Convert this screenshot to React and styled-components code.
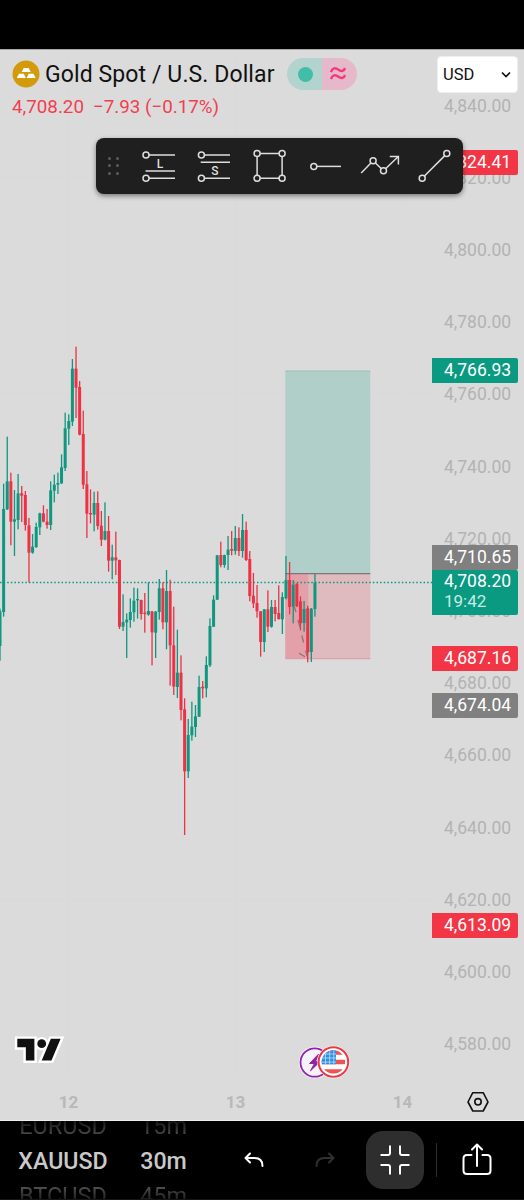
import React from "react";
import styled, { createGlobalStyle } from "styled-components";

const GlobalStyle = createGlobalStyle`
  * {
    box-sizing: border-box;
  }

  body {
    margin: 0;
    background: #000;
    font-family: Roboto, "Liberation Sans", sans-serif;
  }
`;

const UP = "#0f9780";
const DOWN = "#ee3145";

const Page = styled.div`
  display: flex;
  flex-direction: column;
  width: 524px;
  height: 1200px;
  overflow: hidden;
  background: #000;
`;

const StatusBar = styled.div`
  height: 49px;
  flex: none;
`;

const ChartArea = styled.div`
  position: relative;
  display: flex;
  height: 1072px;
  flex: none;
  background: #dbdbdb;
  border-top: 1px solid #a8a8a8;
  border-bottom: 1px solid #ededed;
`;

const ChartMain = styled.div`
  width: 432px;
  display: flex;
  flex-direction: column;
`;

const PlotSvg = styled.svg`
  display: block;
  flex: none;
`;

const Header = styled.div`
  position: absolute;
  top: 8px;
  left: 12px;
  display: flex;
  flex-direction: column;
`;

const TitleRow = styled.div`
  display: flex;
  align-items: center;
  height: 32px;
`;

const Title = styled.div`
  margin-left: 5px;
  width: 242px;
  font-size: 23px;
  letter-spacing: 0.1px;
  color: #111;
  white-space: nowrap;
`;

const StatusPill = styled.div`
  display: flex;
  width: 70px;
  height: 32px;
  border-radius: 16px;
  overflow: hidden;
`;

const PillHalf = styled.div`
  display: flex;
  align-items: center;
  justify-content: center;
  flex: 1;
  background: ${(p) => p.$bg};
`;

const Dot = styled.div`
  width: 15px;
  height: 15px;
  margin-left: 2px;
  border-radius: 50%;
  background: #42bda8;
`;

const QuoteRow = styled.div`
  display: flex;
  gap: 9px;
  height: 33px;
  align-items: center;
  font-size: 18.8px;
  color: #f23f50;
  white-space: nowrap;
`;

const PriceAxis = styled.div`
  position: relative;
  width: 92px;
  display: flex;
  flex-direction: column;
  padding-top: 19.7px;
`;

const AxisLabel = styled.div`
  flex: none;
  height: 72.2px;
  line-height: 72.2px;
  padding-left: 12px;
  font-size: 17.5px;
  color: #b3b3b3;
`;

const PriceTag = styled.div`
  position: absolute;
  top: ${(p) => p.$top}px;
  left: 0;
  width: 86px;
  height: ${(p) => p.$height || 25}px;
  padding-left: 12px;
  border-radius: 0 2px 2px 0;
  background: ${(p) => p.$bg};
  color: #fff;
  font-size: 17.5px;
  line-height: ${(p) => (p.$height ? 23 : 24)}px;
`;

const Countdown = styled.div`
  font-size: 17px;
  line-height: 17px;
  color: #c5ebe4;
`;

const CurrencySelect = styled.div`
  position: absolute;
  top: 6px;
  left: 437px;
  width: 81px;
  height: 37px;
  display: flex;
  align-items: center;
  justify-content: space-between;
  padding: 0 6px 0 5px;
  border: 1px solid #eee;
  border-radius: 4px;
  background: #fff;
  color: #111;
  font-size: 16.5px;
`;

const TimeAxis = styled.div`
  display: flex;
  height: 38px;
  padding-left: 35px;
`;

const TimeLabel = styled.div`
  width: 167px;
  flex: none;
  padding-right: 100px;
  text-align: center;
  font-size: 17px;
  font-weight: 700;
  line-height: 40px;
  color: #b8b8b8;
`;

const SettingsIcon = styled.svg`
  position: absolute;
  left: 466px;
  top: 1040px;
`;

const DrawingBar = styled.div`
  position: absolute;
  top: 88px;
  left: 96px;
  width: 367px;
  height: 55.5px;
  display: flex;
  align-items: center;
  border-radius: 8px;
  background: #1f1f1f;
  box-shadow: 0 2px 5px rgba(0, 0, 0, 0.45);
`;

const DragHandle = styled.div`
  display: grid;
  grid-template-columns: 3px 3px;
  gap: 4.3px 5.7px;
  width: 35.3px;
  padding-left: 11.8px;

  i {
    width: 3px;
    height: 3px;
    border-radius: 50%;
    background: #5c5c5c;
  }
`;

const Tool = styled.div`
  display: flex;
  justify-content: center;
  width: 55.3px;

  svg {
    fill: none;
    stroke: #dedede;
    stroke-width: 1.5;
  }

  circle {
    fill: #1f1f1f;
  }

  text {
    fill: #dedede;
    stroke: none;
    font-size: 12px;
    font-weight: 500;
    text-anchor: middle;
  }
`;

const BottomBar = styled.div`
  display: flex;
  align-items: center;
  height: 79px;
  flex: none;
  background: #000;
  border-bottom: 1px solid #151515;
`;

const Wheel = styled.div`
  display: flex;
  flex-direction: column;
  align-items: center;
  justify-content: center;
  width: ${(p) => p.$width}px;
  height: 78px;
  padding-top: 2px;
  margin-left: ${(p) => p.$left}px;
  overflow: hidden;
`;

const WheelItem = styled.div`
  flex: none;
  height: 35px;
  line-height: 35px;
  font-size: ${(p) => (p.$active ? 23.2 : 23.5)}px;
  font-weight: ${(p) => (p.$active ? 500 : 400)};
  color: ${(p) => (p.$active ? "#c9c9c9" : "transparent")};
  background: ${(p) =>
    p.$active ? "none" : `linear-gradient(${p.$fade}, #080808 25%, #5a5a5a 85%)`};
  background-clip: ${(p) => (p.$active ? "border-box" : "text")};
`;

const IconSlot = styled.div`
  display: flex;
  align-items: center;
  justify-content: center;
  width: ${(p) => p.$width}px;
  height: 40px;

  svg {
    flex: none;
    fill: none;
    stroke: ${(p) => p.$color || "#fff"};
    stroke-width: 2;
    stroke-linecap: round;
    stroke-linejoin: round;
  }
`;

const FullscreenButton = styled(IconSlot)`
  height: 58px;
  margin-left: 31.5px;
  border-radius: 17px;
  background: #2e2e2e;
  flex: none;

  svg {
    stroke-linecap: butt;
  }
`;

const Divider = styled.div`
  width: 1px;
  height: 34px;
  margin: 0 25.5px 0 12px;
  background: #2a2a2a;
`;

// bars: direction, high, body top, body bottom, low - thirds of a pixel below "top"
const segments = [
  {
    top: 340,
    bars: [
      ["u", 806, 814, 918, 962], ["u", 431, 507, 816, 830], ["u", 290, 424, 508, 510],
      ["d", 398, 424, 545, 616], ["u", 450, 538, 545, 648], ["u", 402, 460, 540, 568],
      ["d", 438, 460, 467, 546], ["d", 453, 465, 555, 572], ["d", 534, 556, 638, 727],
      ["u", 582, 620, 638, 641], ["u", 548, 561, 621, 624], ["u", 518, 520, 562, 585],
      ["d", 496, 520, 545, 547], ["d", 507, 545, 555, 566], ["u", 424, 451, 555, 570],
      ["u", 404, 434, 452, 487], ["u", 398, 429, 434, 462], ["u", 343, 382, 430, 432],
      ["u", 218, 265, 384, 393], ["u", 223, 243, 266, 315], ["u", 57, 86, 245, 258],
      ["d", 20, 86, 143, 234], ["d", 123, 141, 284, 286], ["d", 212, 282, 434, 447],
      ["d", 393, 433, 521, 594], ["d", 448, 519, 523, 550], ["u", 455, 489, 524, 574],
      ["d", 454, 489, 558, 569], ["d", 513, 557, 599, 618], ["u", 487, 573, 599, 601],
      ["d", 528, 573, 662, 695], ["u", 614, 652, 662, 718], ["d", 575, 652, 661, 705],
      ["d", 659, 660, 860, 867],
    ],
  },
  {
    top: 480,
    bars: [
      ["u", 343, 426, 440, 453], ["u", 400, 419, 427, 534], ["u", 355, 396, 420, 443],
      ["u", 323, 362, 397, 425], ["u", 325, 357, 361, 416], ["d", 359, 360, 402, 419],
      ["d", 339, 398, 402, 458], ["u", 307, 393, 404, 407], ["d", 393, 394, 457, 556],
      ["u", 393, 395, 458, 534], ["u", 297, 325, 396, 419], ["d", 307, 325, 427, 448],
      ["u", 270, 333, 427, 508], ["d", 299, 333, 496, 617], ["d", 380, 496, 620, 645],
      ["u", 449, 578, 621, 654], ["d", 526, 578, 690, 721], ["d", 655, 688, 874, 1065],
      ["u", 717, 765, 874, 894], ["u", 665, 740, 766, 782], ["u", 675, 709, 741, 771],
      ["u", 587, 621, 710, 711], ["d", 603, 620, 625, 655], ["u", 529, 555, 625, 652],
      ["u", 415, 438, 556, 561], ["u", 346, 359, 440, 441], ["u", 225, 226, 359, 360],
      ["d", 185, 225, 255, 262], ["u", 224, 225, 255, 263], ["u", 168, 209, 225, 270],
      ["d", 153, 207, 212, 226], ["u", 138, 174, 213, 224], ["d", 142, 174, 213, 228],
      ["u", 102, 150, 213, 233], ["d", 125, 150, 240, 243], ["d", 213, 237, 348, 364],
      ["d", 279, 347, 370, 384], ["d", 315, 369, 394, 413], ["d", 393, 394, 486, 530],
      ["u", 387, 388, 486, 516],
    ],
  },
  {
    top: 500,
    bars: [
      ["d", 271, 328, 380, 396], ["u", 300, 321, 380, 383], ["d", 300, 321, 342, 364],
      ["d", 256, 339, 357, 359], ["u", 277, 291, 358, 402], ["u", 168, 240, 295, 298],
      ["d", 186, 240, 321, 343], ["u", 240, 254, 320, 370], ["d", 250, 251, 319, 321],
      ["d", 289, 304, 370, 391], ["u", 303, 327, 369, 395], ["d", 317, 325, 457, 487],
      ["u", 324, 326, 456, 486], ["u", 222, 248, 327, 350],
    ],
  },
];

const candles = segments
  .flatMap((s) => s.bars.map(([dir, ...ys]) => ({ dir, ys: ys.map((y) => s.top + y / 3) })))
  .map((c, i) => ({ ...c, x: i * 3.62 }));

const axisPrices = Array.from({ length: 14 }, (_, i) => 4840 - i * 20);

const tags = [
  { price: "4,824.41", top: 100, bg: "#f23645" },
  { price: "4,766.93", top: 308.4, bg: "#0a9981" },
  { price: "4,710.65", top: 495, bg: "#808080" },
  { price: "4,687.16", top: 596.4, bg: "#f23645" },
  { price: "4,674.04", top: 643.4, bg: "#808080" },
  { price: "4,613.09", top: 863.4, bg: "#f23645" },
];

function Plot() {
  return (
    <PlotSvg width="432" height="1032" viewBox="0 50 432 1032">
      {[68.5, 235.5, 402.5].map((x) => (
        <path key={x} d={`M${x} 50V1076`} stroke="#d9d9d9" />
      ))}
      {axisPrices.map((p, i) => (
        <path key={p} d={`M0 ${105.6 + i * 72.2}H432`} stroke="#dadada" />
      ))}

      <rect x="285.3" y="371" width="85" height="202.5" fill="#b1cfc9" />
      <path d="M285.3 371H370.3" stroke="#9dbdb6" />
      <rect x="285.3" y="573.5" width="85" height="85.5" fill="#dfbabe" />
      <rect x="285.3" y="574" width="23" height="85" fill="#e2a1a8" />
      <path d="M285.3 658.7H370.3" stroke="#df9ba2" />
      <path d="M285.3 573.6H370.3" stroke="#827578" strokeWidth="1.2" />

      <path d="M0 582.5H432" stroke={UP} strokeWidth="1.5" strokeDasharray="1.5 2.12" />

      {candles.map(({ x, dir, ys: [high, top, bottom, low] }) => (
        <g key={x} fill={dir === "u" ? UP : DOWN}>
          <rect x={x - 0.65} y={high} width="1.3" height={low - high} />
          <rect x={x - 1.5} y={top} width="3" height={Math.max(bottom - top, 1.3)} />
        </g>
      ))}

      <path
        d="M294.3 606.7L296 612M298 620L300 627.5M301.8 635.5L303.7 642.5M305.7 650.7L307 656M299 653.3L305 656.7"
        stroke="#8c7376"
        strokeWidth="1.3"
      />

      {/* watermark logo */}
      <g transform="translate(17.3 1034) scale(1.22 1.21)" strokeLinejoin="miter">
        <g fill="#fff" stroke="#fff" strokeWidth="4">
          <path d="M14 22H7V11H0V4h14v18zM28 22h-8l7.5-18h8L28 22z" />
          <circle cx="20" cy="8" r="3.6" />
        </g>
        <g fill="#111">
          <path d="M14 22H7V11H0V4h14v18zM28 22h-8l7.5-18h8L28 22z" />
          <circle cx="20" cy="8" r="3.6" />
        </g>
      </g>

      {/* events on the time axis */}
      <circle cx="314.7" cy="1062.5" r="15.8" fill="#fff" />
      <circle cx="314.7" cy="1062.5" r="14.2" fill="#f7f1f9" stroke="#8e24aa" strokeWidth="1.8" />
      <path d="M318.5 1054.2L309.5 1063.5H314.5L310.5 1070.7L320 1061.7H315.5Z" fill="#8e24aa" stroke="#8e24aa" strokeLinejoin="round" />
      <circle cx="333.4" cy="1062" r="16.2" fill="#fff" />
      <circle cx="333.4" cy="1062" r="14.8" fill="#fff" stroke="#e83947" strokeWidth="2" />
      <clipPath id="flag">
        <circle cx="333.4" cy="1062" r="11.7" />
      </clipPath>
      <g clipPath="url(#flag)">
        <path d="M321 1052.6H346M321 1062H346M321 1071.4H346" stroke="#ef5350" strokeWidth="4.5" />
        <rect x="321" y="1049" width="15" height="15.2" fill="#2f8ee0" />
        <path d="M325.5 1050V1064M329.7 1050V1064M333.8 1050V1064M321 1054H336M321 1058H336M321 1062.1H336" stroke="#b5d8f7" strokeWidth="0.9" />
      </g>
    </PlotSvg>
  );
}

function GoldIcon() {
  return (
    <svg width="28" height="28" viewBox="0 0 28 28">
      <circle cx="14" cy="14" r="13.5" fill="#d39b0b" />
      <path
        d="M11.8 8h4.8l2.2 4H9.6zM7 13.7h4.8l2 4.2H4.8zM16.6 13.7h4.8l2.3 4.2h-9z"
        fill="#fff"
      />
    </svg>
  );
}

function DrawingTools() {
  return (
    <DrawingBar>
      <DragHandle>
        {[0, 1, 2, 3, 4, 5].map((n) => (
          <i key={n} />
        ))}
      </DragHandle>
      <Tool>
        <svg width="40" height="40">
          <path d="M10 9H36M6.5 25H36M10 32.2H36" />
          <circle cx="7" cy="9" r="3" />
          <circle cx="7" cy="32.2" r="3" />
          <text x="21" y="21.5">L</text>
        </svg>
      </Tool>
      <Tool>
        <svg width="40" height="40">
          <path d="M10 9H36M6.7 16.2H36M10 32.2H36" />
          <circle cx="7.4" cy="9" r="3" />
          <circle cx="7.4" cy="32.2" r="3" />
          <text x="21" y="28.5">S</text>
        </svg>
      </Tool>
      <Tool>
        <svg width="40" height="40">
          <path d="M7.1 7.4H32.1V32.3H7.1Z" />
          <circle cx="7.1" cy="7.4" r="3" />
          <circle cx="32.1" cy="7.4" r="3" />
          <circle cx="7.1" cy="32.3" r="3" />
          <circle cx="32.1" cy="32.3" r="3" />
        </svg>
      </Tool>
      <Tool>
        <svg width="40" height="40">
          <path d="M9 20.4H36" />
          <circle cx="8.8" cy="20.4" r="3" />
        </svg>
      </Tool>
      <Tool>
        <svg width="40" height="40">
          <path d="M1.2 27L13.1 14.7L23.5 24.7L38.3 10.5M29.8 10.4H38.4V18.4" />
          <circle cx="13.1" cy="14.7" r="3" />
          <circle cx="23.5" cy="24.7" r="3" />
        </svg>
      </Tool>
      <Tool>
        <svg width="40" height="40">
          <path d="M7.2 32.3L31.8 7.6" />
          <circle cx="7.2" cy="32.3" r="3" />
          <circle cx="31.8" cy="7.6" r="3" />
        </svg>
      </Tool>
    </DrawingBar>
  );
}

function SymbolHeader() {
  return (
    <Header>
      <TitleRow>
        <GoldIcon />
        <Title>Gold Spot / U.S. Dollar</Title>
        <StatusPill>
          <PillHalf $bg="#b3d4ce">
            <Dot />
          </PillHalf>
          <PillHalf $bg="#e6b9ca">
            <svg width="20" height="16" fill="none" stroke="#f4397b" strokeWidth="2.4">
              <path d="M1 6C2.5 1.5 5.5 1.5 8.5 3.8S14 5 15 2M1 13C2.5 8.5 5.5 8.5 8.5 10.8S14 12 15 9" />
            </svg>
          </PillHalf>
        </StatusPill>
      </TitleRow>
      <QuoteRow>
        <span>4,708.20</span>
        <span>−7.93 (−0.17%)</span>
      </QuoteRow>
    </Header>
  );
}

function Controls() {
  return (
    <BottomBar>
      <Wheel $left={16} $width={94}>
        <WheelItem $fade="to bottom">EURUSD</WheelItem>
        <WheelItem $active>XAUUSD</WheelItem>
        <WheelItem $fade="to top">BTCUSD</WheelItem>
      </Wheel>
      <Wheel $left={26} $width={55}>
        <WheelItem $fade="to bottom">15m</WheelItem>
        <WheelItem $active>30m</WheelItem>
        <WheelItem $fade="to top">45m</WheelItem>
      </Wheel>
      <IconSlot $width={125}>
        <svg width="20" height="16">
          <path d="M6 1.5L1.5 6L6 10.5M2 6H10.5Q18.5 6 18.5 14" />
        </svg>
      </IconSlot>
      <IconSlot $width={18} $color="#303030">
        <svg width="20" height="16">
          <path d="M14 1.5L18.5 6L14 10.5M18 6H9.5Q1.5 6 1.5 14" />
        </svg>
      </IconSlot>
      <FullscreenButton $width={58}>
        <svg width="30" height="30">
          <path d="M10 0.5V8Q10 10 8 10H0.5M20 0.5V8Q20 10 22 10H29.5M0.5 20H8Q10 20 10 22V29.5M29.5 20H22Q20 20 20 22V29.5" />
        </svg>
      </FullscreenButton>
      <Divider />
      <IconSlot $width={30}>
        <svg width="30" height="34">
          <path d="M9.5 12H5Q1.5 12 1.5 15.5V27.5Q1.5 31 5 31H25Q28.5 31 28.5 27.5V15.5Q28.5 12 25 12H20.5M15 23V2M10 6.5L15 1.5L20 6.5" />
        </svg>
      </IconSlot>
    </BottomBar>
  );
}

export default function App() {
  return (
    <Page>
      <GlobalStyle />
      <StatusBar />
      <ChartArea>
        <ChartMain>
          <Plot />
          <TimeAxis>
            <TimeLabel>12</TimeLabel>
            <TimeLabel>13</TimeLabel>
            <TimeLabel>14</TimeLabel>
          </TimeAxis>
        </ChartMain>
        <PriceAxis>
          {axisPrices.map((p) => (
            <AxisLabel key={p}>{p.toLocaleString("en-US", { minimumFractionDigits: 2 })}</AxisLabel>
          ))}
          {tags.map((t) => (
            <PriceTag key={t.price} $top={t.top} $bg={t.bg}>
              {t.price}
            </PriceTag>
          ))}
          <PriceTag $top={520} $height={45} $bg="#0a9981">
            4,708.20
            <Countdown>19:42</Countdown>
          </PriceTag>
        </PriceAxis>
        <SymbolHeader />
        <CurrencySelect>
          USD
          <svg width="10" height="8" fill="none" stroke="#111" strokeWidth="1.7">
            <path d="M1 1.5L5 5.5L9 1.5" />
          </svg>
        </CurrencySelect>
        <SettingsIcon width="24" height="24" fill="none" stroke="#111" strokeWidth="1.6">
          <path d="M6.8 2.7H17.2L22 12L17.2 21H6.8L2 12Z" strokeLinejoin="round" />
          <circle cx="12" cy="11.8" r="3.2" />
        </SettingsIcon>
        <DrawingTools />
      </ChartArea>
      <Controls />
    </Page>
  );
}
